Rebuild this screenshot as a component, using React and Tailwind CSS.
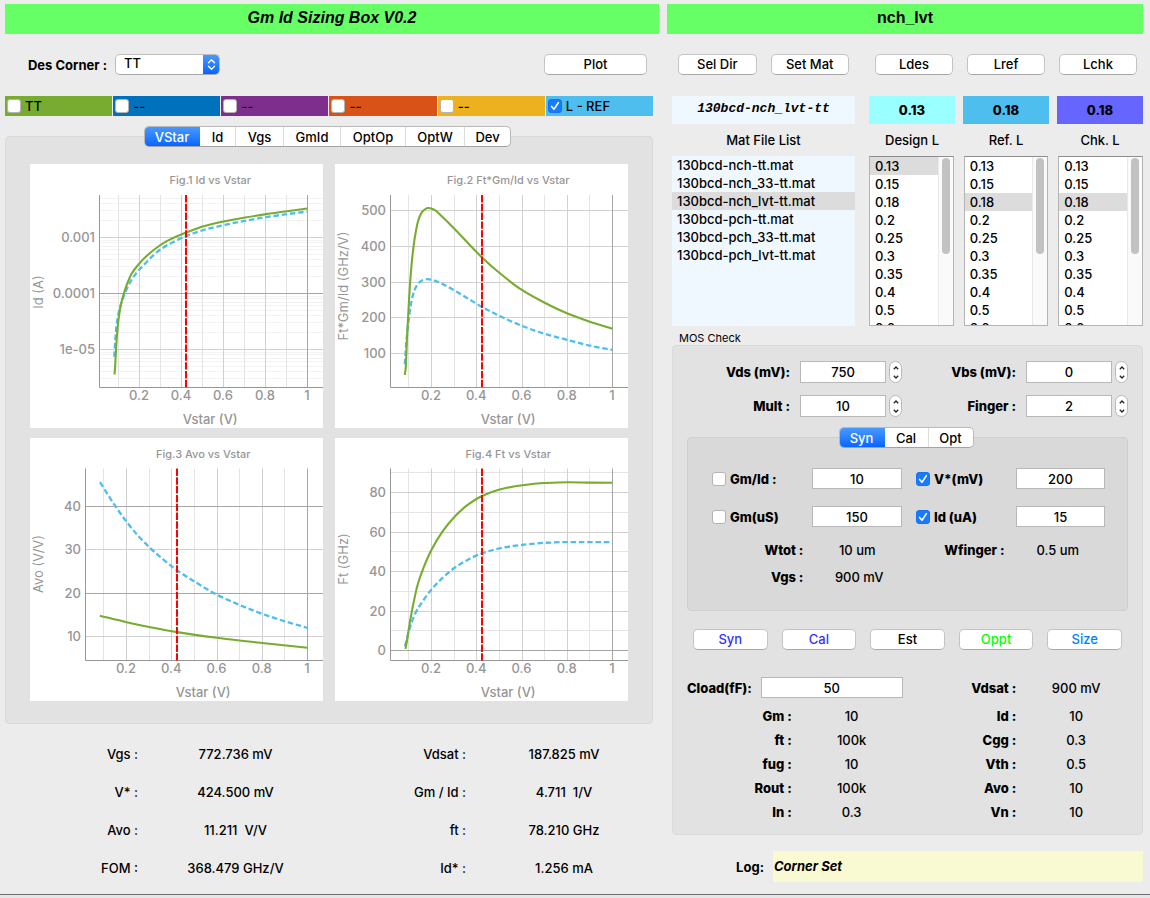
import React, { useState } from "react";

const GREEN = "#77ac30";
const BLUE = "#4dbeee";
const CURSOR = 0.4225;

/* Monotone cubic curve through sample points that are sorted by x. */
function smoothPath(points) {
  const n = points.length;
  const slopes = [];
  for (let i = 0; i < n - 1; i++) {
    slopes.push((points[i + 1][1] - points[i][1]) / (points[i + 1][0] - points[i][0]));
  }
  const tangents = points.map((_, i) => {
    if (i === 0) return slopes[0];
    if (i === n - 1) return slopes[n - 2];
    const a = slopes[i - 1];
    const b = slopes[i];
    if (a * b <= 0) return 0;
    const h0 = points[i][0] - points[i - 1][0];
    const h1 = points[i + 1][0] - points[i][0];
    return (3 * (h0 + h1)) / ((2 * h1 + h0) / a + (h1 + 2 * h0) / b);
  });
  let d = `M${points[0][0].toFixed(2)} ${points[0][1].toFixed(2)}`;
  for (let i = 0; i < n - 1; i++) {
    const [ax, ay] = points[i];
    const [bx, by] = points[i + 1];
    const h = (bx - ax) / 3;
    const c = [ax + h, ay + tangents[i] * h, bx - h, by - tangents[i + 1] * h, bx, by];
    d += "C" + c.map((v) => v.toFixed(2)).join(" ");
  }
  return d;
}

const LOG_MINOR = [-6, -5, -4, -3]
  .flatMap((e) => [2, 3, 4, 5, 6, 7, 8, 9].map((m) => e + Math.log10(m)))
  .filter((v) => v > -5.65 && v < -2.26);

const CHARTS = [
  {
    title: "Fig.1 Id vs Vstar",
    yLabel: "Id (A)",
    yLabelAt: 128,
    height: 264,
    left: 69.5,
    top: 31,
    bottom: 223.5,
    x0: 109.5,
    yRef: [-3, 73.5],
    yScale: 56,
    labelX: 65,
    ticks: [
      [-3, "0.001"],
      [-4, "0.0001"],
      [-5, "1e-05"],
    ],
    dark: [-4],
    faint: LOG_MINOR,
    minor: [],
    green: [[0.081, -5.446], [0.084, -5.3], [0.089, -4.952], [0.094, -4.685], [0.1016, -4.417], [0.111, -4.208], [0.124, -4.018], [0.14, -3.839], [0.163, -3.643], [0.195, -3.482], [0.235, -3.327], [0.283, -3.179], [0.33, -3.065], [0.422, -2.911], [0.505, -2.798], [0.6, -2.714], [0.703, -2.643], [0.802, -2.583], [0.902, -2.53], [1, -2.482]],
    blue: [[0.08, -5.131], [0.084, -4.863], [0.092, -4.536], [0.108, -4.238], [0.128, -4.018], [0.155, -3.804], [0.187, -3.625], [0.227, -3.464], [0.267, -3.315], [0.306, -3.196], [0.354, -3.095], [0.422, -2.976], [0.497, -2.875], [0.6, -2.78], [0.703, -2.702], [0.802, -2.637], [0.902, -2.583], [1, -2.536]],
  },
  {
    title: "Fig.2 Ft*Gm/Id vs Vstar",
    yLabel: "Ft*Gm/Id (GHz/V)",
    yLabelAt: 122,
    height: 264,
    left: 55.5,
    top: 31,
    bottom: 223.5,
    x0: 96.5,
    yRef: [500, 46.5],
    yScale: 0.3575,
    labelX: 51,
    ticks: [
      [500, "500"],
      [400, "400"],
      [300, "300"],
      [200, "200"],
      [100, "100"],
    ],
    dark: [],
    faint: [],
    minor: [],
    green: [[0.082, 40], [0.086, 60], [0.092, 147], [0.101, 254], [0.113, 356], [0.128, 431], [0.142, 473], [0.16, 497], [0.184, 507], [0.21, 503], [0.25, 481], [0.302, 448], [0.361, 409], [0.421, 370], [0.501, 325], [0.601, 277], [0.7, 242], [0.801, 212], [0.9, 189], [1, 169]],
    blue: [[0.082, 70], [0.089, 133], [0.101, 203], [0.116, 259], [0.134, 289], [0.154, 303], [0.181, 308], [0.213, 304], [0.25, 294], [0.302, 276], [0.361, 254], [0.421, 231], [0.501, 205], [0.601, 177], [0.7, 155], [0.801, 138], [0.9, 122], [1, 110]],
  },
  {
    title: "Fig.3 Avo vs Vstar",
    yLabel: "Avo (V/V)",
    yLabelAt: 126,
    height: 263,
    left: 55.5,
    top: 30.5,
    bottom: 222.5,
    x0: 96.5,
    yRef: [40, 68.5],
    yScale: 4.333,
    labelX: 51,
    ticks: [
      [40, "40"],
      [30, "30"],
      [20, "20"],
      [10, "10"],
    ],
    dark: [40, 20],
    faint: [],
    minor: [],
    green: [[0.082, 14.8], [0.2, 13.3], [0.3, 12.2], [0.423, 11], [0.6, 9.7], [0.8, 8.5], [1, 7.4]],
    blue: [[0.083, 45.6], [0.148, 40.3], [0.2, 36.5], [0.252, 33.2], [0.303, 30.5], [0.362, 27.8], [0.423, 25.3], [0.5, 22.7], [0.601, 19.6], [0.699, 17.3], [0.801, 15.2], [0.9, 13.5], [1, 12]],
  },
  {
    title: "Fig.4 Ft vs Vstar",
    yLabel: "Ft (GHz)",
    yLabelAt: 121,
    height: 263,
    left: 55.5,
    top: 30.5,
    bottom: 222.5,
    x0: 96.5,
    yRef: [80, 54.5],
    yScale: 1.975,
    labelX: 51,
    ticks: [
      [80, "80"],
      [60, "60"],
      [40, "40"],
      [20, "20"],
      [0, "0"],
    ],
    dark: [0],
    faint: [],
    minor: [90, 70, 50, 30, 10],
    green: [[0.085, 0.8], [0.092, 5.2], [0.106, 15.4], [0.12, 23.8], [0.139, 33.4], [0.165, 42], [0.199, 50.8], [0.25, 60.4], [0.302, 67.7], [0.354, 73.2], [0.421, 78.1], [0.501, 81.5], [0.601, 83.7], [0.7, 84.8], [0.801, 85.2], [0.9, 85], [1, 84.9]],
    blue: [[0.083, 2.2], [0.103, 11], [0.128, 18.7], [0.162, 25.1], [0.199, 30.8], [0.25, 36.9], [0.302, 41.9], [0.361, 46], [0.421, 49.1], [0.501, 51.7], [0.601, 53.5], [0.7, 54.5], [0.801, 54.9], [1, 54.9]],
  },
];

function Chart({ chart: c }) {
  const right = 293;
  const x = (v) => c.x0 + ((v - 0.2) * (277.5 - c.x0)) / 0.8;
  const y = (v) => c.yRef[1] + (c.yRef[0] - v) * c.yScale;
  const snap = (n) => Math.floor(n) + 0.5;
  const toPath = (pts) => smoothPath(pts.map(([a, b]) => [x(a), y(b)]));
  const center = (c.left + right) / 2;
  const hLine = (v, stroke) => (
    <line key={v} x1={c.left} x2={right} y1={snap(y(v))} y2={snap(y(v))} stroke={stroke} />
  );
  return (
    <svg
      viewBox={`0 0 293 ${c.height}`}
      className="block h-auto w-full bg-white font-['Inter',sans-serif] font-medium"
      role="img"
      aria-label={c.title}
    >
      {c.faint.map((v) => hLine(v, "#f3f3f3"))}
      {[0.1, 0.3, 0.5, 0.7, 0.9].map((v) => (
        <line key={v} x1={snap(x(v))} x2={snap(x(v))} y1={c.top} y2={c.bottom} stroke="#e4e4e4" />
      ))}
      {c.minor.map((v) => hLine(v, "#e4e4e4"))}
      {[0.2, 0.4, 0.6, 0.8].map((v) => (
        <line key={v} x1={snap(x(v))} x2={snap(x(v))} y1={c.top} y2={c.bottom} stroke="#d0d0d0" />
      ))}
      {c.ticks.map(([v]) => hLine(v, c.dark.includes(v) ? "#a6a6a6" : "#d0d0d0"))}
      <line x1="277.5" x2="277.5" y1={c.top} y2={c.bottom} stroke="#a6a6a6" />
      <path d={`M${c.left} ${c.top}V${c.bottom}H${right}`} fill="none" stroke="#969696" />
      <path d={toPath(c.blue)} fill="none" stroke={BLUE} strokeWidth="2.3" strokeDasharray="5.5 2.8" />
      <path d={toPath(c.green)} fill="none" stroke={GREEN} strokeWidth="2.1" />
      <line
        x1={Math.round(x(CURSOR))}
        x2={Math.round(x(CURSOR))}
        y1={c.top}
        y2={c.bottom}
        stroke="#ff0000"
        strokeWidth="2"
        strokeDasharray="7.4 1.4"
      />
      <g fill="#969696" fontSize="13">
        {c.ticks.map(([v, text]) => (
          <text key={v} x={c.labelX} y={y(v) + 4.5} textAnchor="end">
            {text}
          </text>
        ))}
        {[0.2, 0.4, 0.6, 0.8, 1].map((v) => (
          <text key={v} x={x(v) - 0.5} y={c.bottom + 12} textAnchor="middle">
            {v}
          </text>
        ))}
        <text x={center - 1} y={c.bottom + 36} textAnchor="middle">
          Vstar (V)
        </text>
        <text
          x="0"
          y="0"
          textAnchor="middle"
          fontWeight="400"
          transform={`translate(13 ${c.yLabelAt}) rotate(-90)`}
        >
          {c.yLabel}
        </text>
        <text x={center - 1} y="20" fontSize="11" textAnchor="middle">
          {c.title}
        </text>
      </g>
    </svg>
  );
}

function PushButton({ children, className = "text-black" }) {
  return (
    <button
      type="button"
      className={`h-[21px] w-full rounded-[5px] border border-[#c4c4c4] border-b-[#a8a8a8] bg-white pb-px text-center leading-[18px] font-medium ${className}`}
    >
      {children}
    </button>
  );
}

function Check({ id, label, checked, labelClass }) {
  const [on, setOn] = useState(checked);
  return (
    <div className="flex items-center gap-1">
      <span className="grid size-[14px] shrink-0">
        <input
          id={id}
          type="checkbox"
          checked={on}
          onChange={() => setOn(!on)}
          className="col-start-1 row-start-1 size-[14px] appearance-none rounded-[3px] border border-[#b4b4b4] bg-white checked:border-[#1a72f0] checked:bg-[#187bff]"
        />
        {on && (
          <svg viewBox="0 0 14 14" className="pointer-events-none col-start-1 row-start-1 size-[14px]">
            <path d="M3.6 7.4L6 10.2L10.4 3.6" fill="none" stroke="#fff" strokeWidth="1.6" strokeLinecap="round" strokeLinejoin="round" />
          </svg>
        )}
      </span>
      <label htmlFor={id} className={labelClass}>
        {label}
      </label>
    </div>
  );
}

function Tabs({ tabs, label }) {
  const [active, setActive] = useState(tabs[0][0]);
  return (
    <div className="relative z-10 flex justify-center pr-[3px]">
      <div role="tablist" aria-label={label} className="flex h-[21px] overflow-hidden rounded-[5px] border border-[#b9b9b9] border-b-[#a3a3a3] bg-white">
        {tabs.map(([name, width]) => (
          <button
            key={name}
            type="button"
            role="tab"
            aria-selected={active === name}
            onClick={() => setActive(name)}
            className={`-my-px h-[21px] border-r border-[#dcdcdc] leading-[20px] font-medium last:border-r-0 aria-selected:border-transparent aria-selected:bg-linear-to-b aria-selected:from-[#4b9bfb] aria-selected:to-[#0062fe] aria-selected:bg-origin-border aria-selected:text-white ${width}`}
          >
            {name}
          </button>
        ))}
      </div>
    </div>
  );
}

function NumberField({ id, value, className = "h-[22px]" }) {
  return (
    <input
      id={id}
      type="text"
      inputMode="numeric"
      defaultValue={value}
      className={`w-full min-w-0 border border-[#b8b8b8] bg-white text-center font-medium outline-none ${className}`}
    />
  );
}

function Stepper({ label }) {
  return (
    <div className="flex h-[22px] w-[13px] shrink-0 flex-col overflow-hidden rounded-full border border-[#b8b8b8] bg-white">
      <button type="button" aria-label={`Increase ${label}`} className="flex flex-1 items-end justify-center pb-0.5">
        <svg viewBox="0 0 6 4" className="h-1 w-1.5">
          <path d="M0.8 3.2L3 1L5.2 3.2" fill="none" stroke="#222" strokeWidth="1.3" />
        </svg>
      </button>
      <button type="button" aria-label={`Decrease ${label}`} className="flex flex-1 items-end justify-center pb-[3px]">
        <svg viewBox="0 0 6 4" className="h-1 w-1.5">
          <path d="M0.8 0.8L3 3L5.2 0.8" fill="none" stroke="#222" strokeWidth="1.3" />
        </svg>
      </button>
    </div>
  );
}

function SpinField({ id, label, value }) {
  return (
    <>
      <label htmlFor={id} className="pr-[10px] text-right font-extrabold">
        {label}
      </label>
      <div className="flex items-center gap-[3px]">
        <NumberField id={id} value={value} />
        <Stepper label={label} />
      </div>
    </>
  );
}

const LENGTHS = ["0.13", "0.15", "0.18", "0.2", "0.25", "0.3", "0.35", "0.4", "0.5", "0.6"];

function LengthList({ label, initial }) {
  const [selected, setSelected] = useState(initial);
  return (
    <div className="flex h-[170px] overflow-hidden border border-[#b4b4b4] border-t-[#8e8e8e] bg-white">
      <ul role="listbox" aria-label={label} className="min-w-0 flex-1">
        {LENGTHS.map((n) => (
          <li
            key={n}
            role="option"
            aria-selected={selected === n}
            onClick={() => setSelected(n)}
            className="h-[18px] pl-[5px] leading-[19px] font-medium aria-selected:bg-[#dcdcdc]"
          >
            {n}
          </li>
        ))}
      </ul>
      <div className="w-[15px] border-l border-[#e8e8e8] bg-[#fafafa] px-[3px] pt-px">
        <div className="h-24 w-2 rounded-full bg-[#c2c2c2]" />
      </div>
    </div>
  );
}

const FILES = [
  "130bcd-nch-tt.mat",
  "130bcd-nch_33-tt.mat",
  "130bcd-nch_lvt-tt.mat",
  "130bcd-pch-tt.mat",
  "130bcd-pch_33-tt.mat",
  "130bcd-pch_lvt-tt.mat",
];

function FileList() {
  const [selected, setSelected] = useState(FILES[2]);
  return (
    <ul role="listbox" aria-label="Mat File List" className="h-[170px] bg-[#f0f8ff]">
      {FILES.map((f) => (
        <li
          key={f}
          role="option"
          aria-selected={selected === f}
          onClick={() => setSelected(f)}
          className="h-[18px] truncate pl-[5px] leading-[18px] font-medium aria-selected:bg-[#dcdcdc]"
        >
          {f}
        </li>
      ))}
    </ul>
  );
}

const READOUTS = [
  ["Vgs :", "772.736 mV", "Vdsat :", "187.825 mV"],
  ["V* :", "424.500 mV", "Gm / Id :", "4.711  1/V"],
  ["Avo :", "11.211  V/V", "ft :", "78.210 GHz"],
  ["FOM :", "368.479 GHz/V", "Id* :", "1.256 mA"],
];

const RESULTS = [
  ["Gm :", "10", "Id :", "10"],
  ["ft :", "100k", "Cgg :", "0.3"],
  ["fug :", "10", "Vth :", "0.5"],
  ["Rout :", "100k", "Avo :", "10"],
  ["In :", "0.3", "Vn :", "10"],
];

const CORNERS = [
  ["TT", false, "bg-[#77ac30]"],
  ["--", false, "bg-[#0072bd]"],
  ["--", false, "bg-[#7e2f8e]"],
  ["--", false, "bg-[#d95319]"],
  ["--", false, "bg-[#edb120]"],
  ["L - REF", true, "bg-[#4dbeee]"],
];

function SizingPanel() {
  return (
    <section>
      <h1 className="h-[30px] bg-[#66ff66] text-center font-['Liberation_Sans',sans-serif] text-base leading-[28px] font-bold italic">
        Gm Id Sizing Box V0.2
      </h1>
      <div className="mr-[6px]">
        <div className="mt-5 flex items-center pr-[6px]">
          <label htmlFor="corner" className="w-[102px] text-right font-bold">
            Des Corner :
          </label>
          <div className="ml-2 grid h-[21px] w-[105px] overflow-hidden rounded-[5px] border border-[#bdbdbd] border-b-[#a8a8a8] bg-white">
            <select id="corner" className="col-start-1 row-start-1 appearance-none pb-0.5 pl-2 leading-none font-medium outline-none">
              <option>TT</option>
            </select>
            <span className="pointer-events-none col-start-1 row-start-1 -my-px -mr-px flex w-[17px] items-center justify-center justify-self-end bg-linear-to-b from-[#4b9bfb] to-[#0062fe]">
              <svg viewBox="0 0 9 13" className="h-[13px] w-[9px]">
                <path d="M1.5 4.7L4.5 1.8L7.5 4.7M1.5 8.3L4.5 11.2L7.5 8.3" fill="none" stroke="#fff" strokeWidth="1.4" strokeLinecap="round" strokeLinejoin="round" />
              </svg>
            </span>
          </div>
          <div className="ml-auto w-[103px]">
            <PushButton>Plot</PushButton>
          </div>
        </div>

        <div className="mt-[21px] grid grid-cols-6 gap-px">
          {CORNERS.map(([name, on, color], i) => (
            <div key={i} className={`flex h-5 items-center pl-[2px] ${color}`}>
              <Check id={`corner-${i}`} label={name} checked={on} labelClass="font-medium" />
            </div>
          ))}
        </div>

        <div className="mt-[10px]">
          <Tabs
            label="Plots"
            tabs={[
              ["VStar", "w-[55px]"],
              ["Id", "w-9"],
              ["Vgs", "w-12"],
              ["GmId", "w-[57px]"],
              ["OptOp", "w-[65px]"],
              ["OptW", "w-[59px]"],
              ["Dev", "w-[45px]"],
            ]}
          />
          <div className="-mt-[11px] grid grid-cols-2 gap-x-3 gap-y-[10px] rounded border border-[#dadada] bg-[#e2e2e2] px-6 pt-[27px] pb-[22px]">
            {CHARTS.map((c) => (
              <Chart key={c.title} chart={c} />
            ))}
          </div>
        </div>

        <dl className="mt-[11px] grid auto-rows-[38px] grid-cols-[133fr_195fr_133fr_187fr] items-center font-medium">
          {READOUTS.map(([a, b, c, d]) => (
            <React.Fragment key={a}>
              <dt className="text-right">{a}</dt>
              <dd className="text-center whitespace-pre">{b}</dd>
              <dt className="text-right">{c}</dt>
              <dd className="pl-[9px] text-center whitespace-pre">{d}</dd>
            </React.Fragment>
          ))}
        </dl>
      </div>
    </section>
  );
}

function MosCheck() {
  return (
    <fieldset className="min-w-0">
      <legend className="h-[19px] pl-[7px] text-[11px] leading-[24px]">MOS Check</legend>
      <div className="rounded border border-[#dadada] bg-[#e2e2e2] pt-[15px] pb-[10px]">
        <div className="grid grid-cols-[127fr_102fr_124fr_102fr] items-center gap-y-3 pr-[14px]">
          <SpinField id="vds" label="Vds (mV):" value="750" />
          <SpinField id="vbs" label="Vbs (mV):" value="0" />
          <SpinField id="mult" label="Mult :" value="10" />
          <SpinField id="finger" label="Finger :" value="2" />
        </div>

        <div className="mx-[14px] mt-[10px]">
          <Tabs
            label="Sizing mode"
            tabs={[
              ["Syn", "w-[45px]"],
              ["Cal", "w-[44px]"],
              ["Opt", "w-[44px]"],
            ]}
          />
          <div className="-mt-[11px] rounded border border-[#cfcfcf] bg-[#d9d9d9] pt-[30px] pb-5">
            <div className="grid grid-cols-[100fr_90fr_14fr_100fr_89fr] items-center gap-y-[17px] pr-[22px] pl-6">
              <Check id="use-gmid" label="Gm/Id :" checked={false} labelClass="font-extrabold" />
              <NumberField id="gmid" value="10" className="h-[21px]" />
              <span />
              <Check id="use-vstar" label="V*(mV)" checked labelClass="font-extrabold" />
              <NumberField id="vstar" value="200" className="h-[21px]" />
              <Check id="use-gm" label="Gm(uS)" checked={false} labelClass="font-extrabold" />
              <NumberField id="gm" value="150" className="h-[21px]" />
              <span />
              <Check id="use-id" label="Id (uA)" checked labelClass="font-extrabold" />
              <NumberField id="id" value="15" className="h-[21px]" />
            </div>
            <dl className="mt-[9px] grid auto-rows-[27px] grid-cols-[116fr_108fr_94fr_107fr] items-center pr-4 font-medium">
              <dt className="text-right font-extrabold">Wtot :</dt>
              <dd className="text-center">10 um</dd>
              <dt className="text-right font-extrabold">Wfinger :</dt>
              <dd className="text-center">0.5 um</dd>
              <dt className="text-right font-extrabold">Vgs :</dt>
              <dd className="pl-1 text-center">900 mV</dd>
            </dl>
          </div>
        </div>

        <div className="mt-[18px] mr-5 ml-5 grid grid-cols-5 gap-[14px]">
          <PushButton className="text-[#3333ff]">Syn</PushButton>
          <PushButton className="text-[#3333ff]">Cal</PushButton>
          <PushButton>Est</PushButton>
          <PushButton className="text-[#00ff00]">Oppt</PushButton>
          <PushButton className="text-[#0080ff]">Size</PushButton>
        </div>

        <div className="mt-[27px] grid grid-cols-[79fr_151fr_114fr_126fr] items-center">
          <label htmlFor="cload" className="text-right font-extrabold">
            Cload(fF):
          </label>
          <div className="pl-[9px]">
            <NumberField id="cload" value="50" className="h-[21px]" />
          </div>
          <span className="text-right font-extrabold">Vdsat :</span>
          <span className="pr-[6px] text-center font-medium">900 mV</span>
        </div>
        <dl className="mt-[6px] grid auto-rows-[24px] grid-cols-[119fr_120fr_105fr_126fr] items-center font-medium">
          {RESULTS.map(([a, b, c, d]) => (
            <React.Fragment key={a}>
              <dt className="text-right font-extrabold">{a}</dt>
              <dd className="text-center">{b}</dd>
              <dt className="text-right font-extrabold">{c}</dt>
              <dd className="pr-[6px] text-center">{d}</dd>
            </React.Fragment>
          ))}
        </dl>
      </div>
    </fieldset>
  );
}

function DevicePanel() {
  return (
    <section>
      <h2 className="h-[30px] bg-[#66ff66] text-center font-['Liberation_Sans',sans-serif] text-base leading-[28px] font-bold">
        nch_lvt
      </h2>
      <div className="ml-[5px]">
        <div className="mt-5 grid grid-cols-[183fr_274fr] gap-x-[14px]">
          <div className="grid grid-cols-2 gap-[14px] px-[6px]">
            <PushButton>Sel Dir</PushButton>
            <PushButton>Set Mat</PushButton>
          </div>
          <div className="grid grid-cols-3 gap-[14px] px-[6px]">
            <PushButton>Ldes</PushButton>
            <PushButton>Lref</PushButton>
            <PushButton>Lchk</PushButton>
          </div>
        </div>

        <div className="mt-[21px] grid grid-cols-[183fr_274fr] gap-x-[14px]">
          <output className="h-7 bg-[#f0f8ff] text-center font-['Liberation_Mono',monospace] leading-[26px] font-bold italic">
            130bcd-nch_lvt-tt
          </output>
          <div className="grid grid-cols-3 gap-2 text-center leading-[29px] font-extrabold">
            <output className="h-7 bg-[#99ffff]">0.13</output>
            <output className="h-7 bg-[#4dbeee]">0.18</output>
            <output className="h-7 bg-[#6666ff]">0.18</output>
          </div>
        </div>

        <div className="grid h-8 grid-cols-[183fr_274fr] items-center gap-x-[14px] text-center font-medium">
          <span>Mat File List</span>
          <div className="grid grid-cols-3 gap-2">
            <span>Design L</span>
            <span>Ref. L</span>
            <span>Chk. L</span>
          </div>
        </div>

        <div className="grid grid-cols-[183fr_274fr] gap-x-[14px]">
          <FileList />
          <div className="grid grid-cols-3 gap-[10px]">
            <LengthList label="Design L" initial="0.13" />
            <LengthList label="Ref. L" initial="0.18" />
            <LengthList label="Chk. L" initial="0.18" />
          </div>
        </div>

        <MosCheck />

        <div className="mt-4 flex items-center">
          <span className="w-[92px] text-right font-bold">Log:</span>
          <output className="ml-[9px] h-[31px] flex-1 bg-[#fafad2] pl-px leading-[31px] font-bold italic">
            Corner Set
          </output>
        </div>
      </div>
    </section>
  );
}

export default function App() {
  return (
    <div className="flex min-h-screen flex-col bg-[#ececec] font-['Inter',sans-serif] text-[13px] leading-4 text-black">
      <main className="grid grow grid-cols-[654fr_476fr] gap-x-2 pt-1 pr-[7px] pl-[5px]">
        <SizingPanel />
        <DevicePanel />
      </main>
      <footer className="h-1 border-t border-[#6e6e6e] bg-[#e6e6e6]" />
    </div>
  );
}
